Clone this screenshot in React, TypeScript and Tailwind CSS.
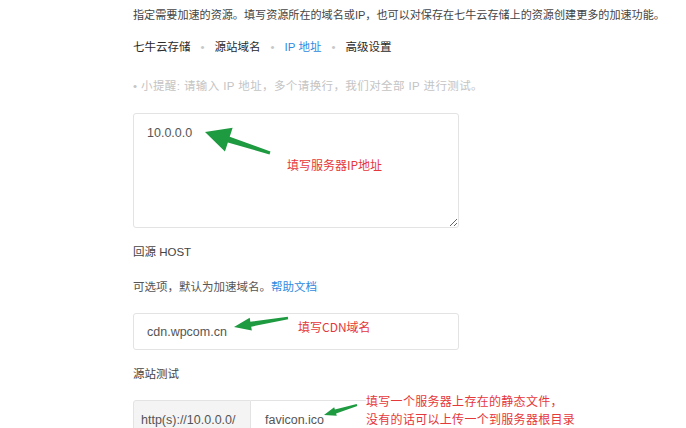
import React from "react";

type Pt = [number, number];

// build an arrow polygon from tail to tip
function arrowPoints(tail: Pt, tip: Pt, shaft: number, headLen: number, headW: number) {
  const dx = tip[0] - tail[0];
  const dy = tip[1] - tail[1];
  const len = Math.hypot(dx, dy);
  const ux = dx / len;
  const uy = dy / len;
  const nx = -uy;
  const ny = ux;
  const bx = tip[0] - ux * headLen;
  const by = tip[1] - uy * headLen;
  const pts: Pt[] = [
    [tail[0] + (nx * shaft) / 4, tail[1] + (ny * shaft) / 4],
    [bx + (nx * shaft) / 2, by + (ny * shaft) / 2],
    [bx + (nx * headW) / 2, by + (ny * headW) / 2],
    tip,
    [bx - (nx * headW) / 2, by - (ny * headW) / 2],
    [bx - (nx * shaft) / 2, by - (ny * shaft) / 2],
    [tail[0] - (nx * shaft) / 4, tail[1] - (ny * shaft) / 4],
  ];
  return pts.map((p) => p.join(",")).join(" ");
}

const font = { fontFamily: '"Liberation Sans", "Noto Sans CJK SC", sans-serif' };
const redFont = { fontFamily: '"Noto Sans CJK SC", sans-serif' };

function Tabs() {
  const items = ["七牛云存储", "源站域名", "IP 地址", "高级设置"];
  return (
    <div className="flex h-[36px] items-center text-[11.5px] text-[#2a2a2a]">
      {items.map((t, i) => (
        <div key={t} className="flex items-center">
          {i > 0 && <span className="mx-[10px] text-[#c8c8c8]">•</span>}
          <span className={t === "IP 地址" ? "text-[#2f8ae0]" : ""}>{t}</span>
        </div>
      ))}
    </div>
  );
}

export default function App() {
  return (
    <div className="relative h-[428px] w-[686px] overflow-hidden bg-white" style={font}>
      <div className="flex flex-col pl-[133px]">
        <div className="flex h-[30px] items-center whitespace-nowrap text-[11.1px] text-[#444]">
          指定需要加速的资源。填写资源所在的域名或IP，也可以对保存在七牛云存储上的资源创建更多的加速功能。
        </div>
        <Tabs />
        <div className="flex h-[42px] items-center whitespace-nowrap text-[11.5px] tracking-[0.4px] text-[#c4c4c4]">
          • 小提醒: 请输入 IP 地址，多个请换行，我们对全部 IP 进行测试。
        </div>
        <textarea
          readOnly
          defaultValue="10.0.0.0"
          className="mt-[5px] h-[115px] w-[326px] rounded-[3px] border border-[#e3e3e3] px-[13px] pt-[10px] text-[12.5px] leading-[18px] text-[#555] outline-none"
        />
        <div className="flex h-[50px] items-center text-[11.5px] text-[#444]">回源 HOST</div>
        <div className="flex h-[20px] items-center text-[11.5px] text-[#555]">
          可选项，默认为加速域名。
          <span className="text-[#2f8ae0]">帮助文档</span>
        </div>
        <input
          readOnly
          value="cdn.wpcom.cn"
          className="mt-[15px] h-[37px] w-[326px] rounded-[3px] border border-[#e3e3e3] px-[13px] text-[12.5px] text-[#555] outline-none"
        />
        <div className="flex h-[50px] items-center text-[11.5px] text-[#444]">源站测试</div>
        <div className="flex h-[40px] w-[326px]">
          <div className="flex w-[118px] items-center rounded-l-[3px] border border-[#e3e3e3] bg-[#f4f4f4] pl-[7px] text-[12.5px] text-[#555]">
            http(s)://10.0.0.0/
          </div>
          <div className="flex flex-1 items-center rounded-r-[3px] border border-l-0 border-[#e3e3e3] pl-[14px] text-[12.5px] text-[#555]">
            favicon.ico
          </div>
        </div>
      </div>

      {/* annotations */}
      <svg className="pointer-events-none absolute left-0 top-0" width="686" height="428">
        <polygon points={arrowPoints([270, 153], [205, 132], 6, 25, 25)} fill="#1e9a41" />
        <polygon points={arrowPoints([288, 318], [234, 327], 5, 17, 13)} fill="#1e9a41" />
        <polygon points={arrowPoints([357, 405], [324, 415], 4, 12, 9)} fill="#1e9a41" />
      </svg>
      <div
        className="absolute left-[287px] top-[156px] whitespace-nowrap text-[12px] leading-[18px] text-[#e5383b]"
        style={redFont}
      >
        填写服务器IP地址
      </div>
      <div
        className="absolute left-[298px] top-[318px] whitespace-nowrap text-[12px] leading-[18px] text-[#e5383b]"
        style={redFont}
      >
        填写CDN域名
      </div>
      <div
        className="absolute left-[366px] top-[392px] whitespace-nowrap bg-white text-[12px] leading-[18px] tracking-[0.3px] text-[#e5383b]"
        style={redFont}
      >
        填写一个服务器上存在的静态文件，
        <br />
        没有的话可以上传一个到服务器根目录
      </div>
    </div>
  );
}
